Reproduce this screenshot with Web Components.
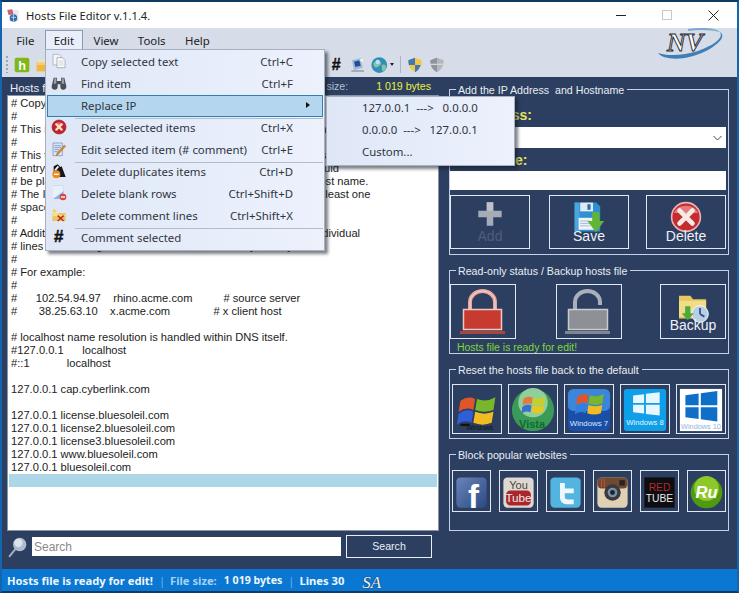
<!DOCTYPE html>
<html>
<head>
<meta charset="utf-8">
<title>Hosts File Editor</title>
<style>
  html, body { margin: 0; padding: 0; height: 100%; overflow: hidden; background: #2d3f60; }
</style>
</head>
<body>
<hf-window>
  <hf-titlebar slot="top">Hosts File Editor v.1.1.4.</hf-titlebar>
  <hf-menubar slot="top"></hf-menubar>
  <hf-toolbar slot="top"></hf-toolbar>

  <hf-hosts-panel slot="left"></hf-hosts-panel>

  <hf-group slot="right" style="height:166px" label="Add the IP Address&#160; and Hostname">
    <hf-ip-form></hf-ip-form>
  </hf-group>
  <hf-group slot="right" style="height:84px;margin-top:15px" label="Read-only status / Backup hosts file">
    <hf-lock-row></hf-lock-row>
  </hf-group>
  <hf-group slot="right" style="height:70px;margin-top:15px" label="Reset the hosts file back to the default">
    <hf-tile-row tiles="xp,vista,win7,win8,win10" tile-w="50" tile-h="50" gap="6" top="7"></hf-tile-row>
  </hf-group>
  <hf-group slot="right" style="height:77px;margin-top:15px" label="Block popular websites">
    <hf-tile-row tiles="facebook,youtube,twitter,instagram,redtube,ru" tile-w="39" tile-h="41.5" gap="8" top="8"></hf-tile-row>
  </hf-group>

  <hf-statusbar slot="bottom"></hf-statusbar>

  <hf-menu slot="popup" style="left:45px;top:49px;width:280px">
    <hf-menu-item icon="copy" shortcut="Ctrl+C">Copy selected text</hf-menu-item>
    <hf-menu-item icon="binoculars" shortcut="Ctrl+F">Find item</hf-menu-item>
    <hf-menu-item selected arrow>Replace IP</hf-menu-item>
    <hf-menu-item icon="redx" shortcut="Ctrl+X" sep>Delete selected items</hf-menu-item>
    <hf-menu-item icon="editdoc" shortcut="Ctrl+E">Edit selected item (# comment)</hf-menu-item>
    <hf-menu-item icon="dupes" shortcut="Ctrl+D" sep>Delete duplicates items</hf-menu-item>
    <hf-menu-item icon="blank" shortcut="Ctrl+Shift+D">Delete blank rows</hf-menu-item>
    <hf-menu-item icon="comments" shortcut="Ctrl+Shift+X">Delete comment lines</hf-menu-item>
    <hf-menu-item icon="hash" sep>Comment selected</hf-menu-item>
  </hf-menu>
  <hf-menu slot="popup" style="left:326px;top:96px;width:189px;padding-top:0;padding-bottom:2px">
    <hf-menu-item>127.0.0.1 &#160;---&gt; &#160;&#160;0.0.0.0</hf-menu-item>
    <hf-menu-item>0.0.0.0 &#160;---&gt; &#160;&#160;127.0.0.1</hf-menu-item>
    <hf-menu-item>Custom...</hf-menu-item>
  </hf-menu>
</hf-window>

<script>
// all the little pictures, drawn on a 24x24 box unless the viewBox says otherwise
const FLAG = (r, g, b, y) => `
  <path d="M3 7 Q7 4 11 6 L10 12 Q6 10 2 13Z" fill="${r}"/>
  <path d="M12 6 Q17 8 22 5 L21 12 Q16 14 11 12Z" fill="${g}"/>
  <path d="M2 14 Q6 11 10 13 L9 19 Q5 17 1 20Z" fill="${b}"/>
  <path d="M11 13 Q16 15 21 13 L20 19 Q15 21 10 19Z" fill="${y}"/>`;
const PANES = (c) => `<path d="M5 6.500 11 5.600V11.500H5ZM12 5.400 19.500 4.300V11.500H12ZM5 12.500H11V18.400L5 17.500ZM12 12.500H19.500V19.700L12 18.600Z" fill="${c}"/>`;
const ICONS = {
  app: `<rect x="5" y="3" width="15" height="18" fill="#e8e8ee"/><path d="M2 3 10 2 12 10 4 11Z" fill="#c9607a"/><circle cx="12" cy="16" r="6" fill="#2f6fa8"/><path d="M8 15h8M12 10v12" stroke="#bcd6ea" stroke-width="1.400"/>`,
  h: `<rect x="1" y="1" width="22" height="22" rx="3" fill="#7fb81c"/><text x="12" y="19" text-anchor="middle" font-family="Liberation Sans" font-weight="700" font-size="19" fill="#fff">h</text>`,
  folder: `<path d="M4 2h10l8 4v5H4z" fill="#e8e2d0"/><path d="M1 8h22v15H1z" fill="#f0b840"/><path d="M1 8h22v4H1z" fill="#f6d070"/>`,
  copy: `<path d="M3 2h9l3 3v13H3z" fill="#f4f6fa" stroke="#9aa0aa"/><path d="M9 7h8l4 4v11H9z" fill="#fff" stroke="#8b919c"/><path d="M11 12h8M11 15h8M11 18h8" stroke="#b5bac3"/>`,
  binoculars: `<path d="M4 4h5v5h6V4h5l3 13a4.500 4.500 0 0 1-9 1v-4h-4v4a4.500 4.500 0 0 1-9-1z" fill="#4a4d55"/><path d="M5 5h3v8H4zM16 5h3l1 8h-4z" fill="#9b9fa8"/>`,
  redx: `<circle cx="12" cy="12" r="10.500" fill="#c5202a"/><circle cx="12" cy="12" r="10.500" fill="none" stroke="#8f2630"/><path d="M5 9a8 8 0 0 1 14 0z" fill="#e8707a"/><path d="M8 8 16 16M16 8 8 16" stroke="#f4e0c8" stroke-width="3.400" stroke-linecap="round"/>`,
  editdoc: `<path d="M3 3h14v19H3z" fill="#dce6f4" stroke="#6e86ad"/><path d="M5 7h10M5 10h10M5 13h7M5 16h5" stroke="#5f7fb3"/><path d="M22 8 11 20l-3 2 1-4L20 6z" fill="#d98a30" stroke="#8a5a20" stroke-width=".6"/>`,
  dupes: `<path d="M4 13V5l6-3 4 4 2-1 6 16H8z" fill="#17171b"/><path d="M5 10 10 4l2 2-5 6z" fill="#f7f7f7"/><circle cx="8" cy="17" r="6" fill="#ee8a22"/><rect x="4.500" y="16" width="7" height="2" fill="#fff"/>`,
  blank: `<rect x="3" y="1" width="16" height="20" fill="#8db4e4"/><path d="M3 1h16v8L3 21z" fill="#e8f0fb"/><circle cx="18" cy="18" r="5" fill="#d8453a"/><rect x="15" y="17" width="6" height="2" fill="#fff"/>`,
  comments: `<path d="M2 9h20v12H2z" fill="#e8c660"/><path d="M2 9h8l2 3h10v2H2z" fill="#f4de94"/><path d="M5 2l1 3 3 1-3 1-1 3-1-3-3-1 3-1z" fill="#f6d420"/><path d="M10 13l9 8M19 13l-9 8" stroke="#c62f22" stroke-width="2.400"/>`,
  add: `<path d="M15 2h10v13h13v10H25v13H15V25H2V15h13z" fill="#a6acb6"/><path d="M15 2h10v13H15z" fill="#bcc2ca"/>`,
  save: `<path d="M2 2h27l5 5v31H2z" fill="#2f8fcf"/><path d="M2 2h6v36H2z" fill="#4aa6de"/><rect x="9" y="2" width="16" height="11" fill="#dfeaf4"/><rect x="18" y="4" width="4" height="7" fill="#2f6fa8"/><rect x="7" y="21" width="23" height="15" fill="#eef2f6"/><path d="M9 25h12M9 28h12M9 31h12" stroke="#9ab0c4"/><path d="M24 14h9v11h6L28.500 39 18 25h6z" fill="#62b533"/>`,
  del: `<circle cx="20" cy="20" r="18" fill="#c52c30"/><circle cx="20" cy="20" r="18" fill="none" stroke="#e8b4b8" stroke-width="2"/><path d="M5 15a16 14 0 0 1 30 0z" fill="#e67a7e"/><path d="M12 12 28 28M28 12 12 28" stroke="#f4ece4" stroke-width="6" stroke-linecap="round"/>`,
  lockred: `<path d="M19 24V17a12.500 11 0 0 1 25 0V24" fill="none" stroke="#e8a6a0" stroke-width="4"/><path d="M19 24V17a12.500 11 0 0 1 25 0V24" fill="none" stroke="#f4d8d0" stroke-width="1"/><rect x="12.500" y="24.500" width="38" height="20" fill="#c63a30" stroke="#f0c8c0" stroke-width="1.500"/><rect x="9" y="46" width="45" height="3" fill="#a8453c"/>`,
  lockgrey: `<path d="M18 24V17a12.500 11 0 0 1 25 0V20" fill="none" stroke="#aab0ba" stroke-width="4"/><rect x="11.500" y="24.500" width="39" height="20" fill="#8e9096" stroke="#c8cbd0" stroke-width="1.500"/><rect x="8" y="46" width="45" height="3" fill="#82868e"/>`,
  backup: `<path d="M2 3h13l3 4h15v22H2z" fill="#e8c860"/><path d="M2 9h31v18H2z" fill="#f2dc88"/><circle cx="26" cy="24" r="9.500" fill="#b8cde6" stroke="#fff"/><path d="M26 24V17M26 24l5 3" stroke="#34507c" stroke-width="2"/><path d="M9 15h6v8h4l-7 8-7-8h4z" fill="#4caa38"/>`,
  xp: `<svg viewBox="0 0 24 24">${FLAG('#e2552a', '#78b72a', '#2f5fd8', '#f0bc20')}<rect x="3" y="19.500" width="5" height="1.200" fill="#111"/><text x="13.500" y="23" text-anchor="middle" font-family="Liberation Sans" font-size="3.600" fill="#111">Windows</text></svg>`,
  vista: `<svg viewBox="0 0 24 24"><circle cx="12" cy="12" r="11.500" fill="#3b9a58"/><circle cx="12" cy="8" r="8" fill="#8fcf9c"/><g transform="translate(5 1.500) scale(.62)">${FLAG('#e8773a', '#c8d028', '#3a6fd0', '#e8c820')}</g><text x="11.500" y="22" text-anchor="middle" font-family="Liberation Sans" font-weight="700" font-size="6" fill="#0f6a30">Vista</text></svg>`,
  win7: `<svg viewBox="0 0 24 24"><rect x=".5" y=".5" width="23" height="23" rx="3" fill="#1a4fa8"/><rect x=".5" y=".5" width="23" height="12" rx="3" fill="#3b86d8"/><g transform="translate(3.500 -.5) scale(.75)">${FLAG('#e2552a', '#78b72a', '#2f7fe0', '#f0bc20')}</g><text x="12" y="20.500" text-anchor="middle" font-family="Liberation Sans" font-size="4.300" fill="#dce8f8">Windows 7</text></svg>`,
  win8: `<svg viewBox="0 0 24 24"><rect x=".5" y=".5" width="23" height="23" rx="1.500" fill="#0f9fe8"/><g transform="translate(.5 -1.300) scale(1 .83)">${PANES('#e8f6ff')}</g><text x="12" y="20" text-anchor="middle" font-family="Liberation Sans" font-size="4.200" fill="#e8f6ff">Windows 8</text></svg>`,
  win10: `<svg viewBox="0 0 24 24"><rect x=".5" y=".5" width="23" height="23" fill="#fff"/><g transform="translate(-2.500 -3) scale(1.200 1.080)">${PANES('#0f6fc8')}</g><text x="12" y="22.500" text-anchor="middle" font-family="Liberation Sans" font-size="4" fill="#8fb4dc">Windows 10</text></svg>`,
  facebook: `<svg viewBox="0 0 24 24"><defs><linearGradient id="fb" x1="0" y1="0" x2="1" y2="1"><stop offset="0" stop-color="#6a84b8"/><stop offset="1" stop-color="#2a4a86"/></linearGradient></defs><rect x="1" y="1" width="22" height="22" rx="3" fill="url(#fb)"/><text x="13.500" y="23" text-anchor="middle" font-family="Liberation Sans" font-weight="700" font-size="24" fill="#fff">f</text></svg>`,
  youtube: `<svg viewBox="0 0 24 24"><rect x="1" y="1" width="22" height="22" rx="3" fill="#ddd8d2"/><text x="12" y="9.500" text-anchor="middle" font-family="Liberation Sans" font-size="8" fill="#4a4440">You</text><rect x="3" y="10.500" width="18" height="11" rx="3" fill="#a8262c"/><text x="12" y="19" text-anchor="middle" font-family="Liberation Sans" font-size="8.500" fill="#f4e8e4">Tube</text></svg>`,
  twitter: `<svg viewBox="0 0 24 24"><rect x="1" y="1" width="22" height="22" rx="3" fill="#54b4e0"/><path d="M8 5h3.500v4H18v3.500h-6.500V15c0 1.500 1 2 2 2H18v3.500h-5C10 20.500 8 18.500 8 15.500z" fill="#eef8fc"/></svg>`,
  instagram: `<svg viewBox="0 0 24 24"><rect x="1" y="1" width="22" height="22" rx="3" fill="#e0d0b4"/><rect x="1" y="1" width="22" height="8" rx="3" fill="#6e4a30"/><circle cx="12" cy="12" r="6" fill="#3a3a3e"/><circle cx="12" cy="12" r="3.500" fill="#7890a8"/><circle cx="12" cy="12" r="1.800" fill="#20242c"/><rect x="17" y="3" width="4" height="4" fill="#2a2420"/><path d="M4 2v6M6 2v6" stroke="#c84a40" stroke-width=".8"/></svg>`,
  redtube: `<svg viewBox="0 0 24 24"><rect x="1" y="1" width="22" height="22" fill="#0e0e10"/><text x="12" y="11" text-anchor="middle" font-family="Liberation Sans" font-size="7.500" fill="#b02a2e">RED</text><text x="12" y="19" text-anchor="middle" font-family="Liberation Sans" font-size="7.500" fill="#e8e8e8">TUBE</text></svg>`,
  ru: `<svg viewBox="0 0 24 24"><circle cx="12" cy="12" r="11.500" fill="#4f9a10"/><circle cx="12" cy="9" r="9" fill="#8cc82a"/><text x="12" y="16" text-anchor="middle" font-family="Liberation Sans" font-weight="700" font-style="italic" font-size="12" fill="#fff">Ru</text></svg>`,
  magnifier: `<path d="M2 23 10 13" stroke="#9fb0c8" stroke-width="2.400" stroke-linecap="round"/><circle cx="14" cy="9" r="8" fill="#aebacd"/><circle cx="12.500" cy="7" r="5" fill="#dde3ec"/>`,
  monitor: `<path d="M3 5l13-3 3 14-13 4z" fill="#9fb6d8"/><path d="M6 7l8-2 2 8-8 2z" fill="#1f4f9a"/><path d="M14 5a5 4 0 0 1 6-2l-1 5z" fill="#f4f4f4"/><path d="M2 20h19v2H2z" fill="#8a94a4"/>`,
  globe: `<circle cx="11" cy="12" r="10.500" fill="#2f8fb8"/><path d="M3 10q5-6 9-3t-2 7-7-4zM14 12q6-2 6 3t-5 5z" fill="#86c2a8"/><circle cx="9" cy="8" r="3" fill="#bde0ec"/>`,
  shield: `<path d="M12 1 22 5c0 9-3 14-10 18C5 19 2 14 2 5z" fill="#f0c840"/><path d="M12 1 2 5c0 3 .3 5 1 7h9zM12 12v11c4-2 7-6 8.500-11z" fill="#3a78c0"/>`,
  shieldoff: `<path d="M12 1 22 5c0 9-3 14-10 18C5 19 2 14 2 5z" fill="#b4b8be"/><path d="M12 1v22C5 19 2 14 2 5z" fill="#8f939b"/><path d="M2 11h20" stroke="#d4d6da" stroke-width="2"/>`
};

class HfIcon extends HTMLElement {
  connectedCallback() {
    const name = this.getAttribute('name');
    const w = this.getAttribute('w') || 16;
    const h = this.getAttribute('h') || w;
    const box = this.getAttribute('box') || '0 0 24 24';
    const body = ICONS[name] || '';
    const svg = body.startsWith('<svg') ? body.replace('<svg', `<svg width="${w}" height="${h}"`)
      : `<svg width="${w}" height="${h}" viewBox="${box}">${body}</svg>`;
    this.attachShadow({ mode: 'open' }).innerHTML = `
      <style>:host { display: inline-block; line-height: 0; flex: none; width: ${w}px; height: ${h}px; } svg { display: block; overflow: visible; }</style>${svg}`;
  }
}

class HfWindow extends HTMLElement {
  constructor() {
    super();
    this.attachShadow({ mode: 'open' }).innerHTML = `
      <style>
        :host {
          display: flex; flex-direction: column; position: relative; box-sizing: border-box;
          width: 739px; height: 593px; background: #2d3f60;
          border-top: 2px solid #103a66; border-bottom: 2px solid #0e3a66;
          border-left: 2px solid #1465ad; border-right: 2px solid #1465ad;
          font: 12px "Liberation Sans", Arial, sans-serif;
        }
        #top { display: block; }
        #main { flex: 1; display: flex; min-height: 0; }
        #left { display: block; width: 445px; flex: none; }
        #right { display: block; width: 280px; margin-left: 2px; padding-top: 12px; }
      </style>
      <div id="top"><slot name="top"></slot></div>
      <div id="main">
        <div id="left"><slot name="left"></slot></div>
        <div id="right"><slot name="right"></slot></div>
      </div>
      <slot name="bottom"></slot>
      <slot name="popup"></slot>
    `;
  }
}

class HfTitlebar extends HTMLElement {
  constructor() {
    super();
    this.attachShadow({ mode: 'open' }).innerHTML = `
      <style>
        :host {
          display: flex; align-items: center; height: 26px; background: #fff; color: #222;
          font: 11.200px "Noto Sans", sans-serif; padding-left: 4px;
        }
        hf-icon { margin-right: 5px; }
        #caption { flex: 1; }
        .ctl { width: 46px; height: 26px; display: flex; align-items: center; justify-content: center; flex: none; }
        #ctls { display: flex; margin-right: 1px; }
      </style>
      <hf-icon name="app" w="15"></hf-icon>
      <div id="caption"><slot></slot></div>
      <div id="ctls">
        <div class="ctl"><svg width="10" height="10"><path d="M0 5.500h10" stroke="#222"/></svg></div>
        <div class="ctl"><svg width="10" height="10"><rect x=".5" y=".5" width="9" height="9" fill="none" stroke="#c8c8c8"/></svg></div>
        <div class="ctl"><svg width="11" height="11"><path d="M.5.500l10 10M10.500.500l-10 10" stroke="#222"/></svg></div>
      </div>
    `;
  }
}

class HfMenubar extends HTMLElement {
  constructor() {
    super();
    const items = ['File', 'Edit', 'View', 'Tools', 'Help'];
    this.attachShadow({ mode: 'open' }).innerHTML = `
      <style>
        :host {
          display: flex; align-items: center; position: relative; height: 24px; background: #d6dce8;
          padding-left: 4.500px; color: #222; font: 11.400px "Noto Sans", sans-serif;
        }
        .item { padding: 0 8.200px; line-height: 20px; border: 1px solid transparent; margin: 0 .5px; border-bottom: 0; }
        .item.open { background: #e8eefa; border-color: #8c9ab0; position: relative; z-index: 1; }
        #logo { margin-left: auto; margin-right: 11px; margin-top: 8px; overflow: visible; }
      </style>
      ${items.map((t) => `<div class="item${t === 'Edit' ? ' open' : ''}">${t}</div>`).join('')}
      <svg id="logo" width="68" height="33" viewBox="0 0 68 33">
        <path d="M0 25C6 33 30 33 50 22 62 15 68 8 62 4 66 10 56 17 40 23 25 28 8 28 0 25Z" fill="#3f7fb8"/>
        <path d="M30 1C44 -1 58 0 62 4 55 2 44 1 30 3Z" fill="#7aa6cf"/>
        <text x="27" y="23" text-anchor="middle" font-family="Liberation Serif" font-style="italic" font-weight="700" font-size="25" fill="#fff" stroke="#23262e" stroke-width=".9" textLength="36" lengthAdjust="spacingAndGlyphs">NV</text>
      </svg>
    `;
  }
}

class HfToolbar extends HTMLElement {
  constructor() {
    super();
    this.attachShadow({ mode: 'open' }).innerHTML = `
      <style>
        :host {
          display: flex; align-items: center; height: 25px; background: #d6dce8; padding-left: 4px;
          box-sizing: border-box;
        }
        #grip { width: 2px; height: 17px; margin-right: 6px; background: repeating-linear-gradient(#9aa4b4 0 2px, transparent 2px 4px); }
        #hash { font: italic 700 16px "Liberation Sans", sans-serif; color: #111; width: 12px; margin-left: 280px; margin-right: 8px; text-align: center; -webkit-text-stroke: .4px #111; }
        #drop { width: 0; height: 0; border: 2.500px solid transparent; border-top: 3px solid #222; border-bottom: 0; margin: 0 6px 0 1px; }
        #sep { width: 1px; height: 17px; background: #aab4c4; margin-right: 6px; }
      </style>
      <div id="grip"></div>
      <hf-icon name="h" w="16"></hf-icon>
      <hf-icon name="folder" w="14" style="margin-left:6px"></hf-icon>
      <div id="hash">#</div>
      <hf-icon name="monitor" w="16"></hf-icon>
      <hf-icon name="globe" w="18" style="margin-left:5px"></hf-icon>
      <div id="drop"></div>
      <div id="sep"></div>
      <hf-icon name="shield" w="16"></hf-icon>
      <hf-icon name="shieldoff" w="16" style="margin-left:6px"></hf-icon>
    `;
  }
}

class HfHostsPanel extends HTMLElement {
  constructor() {
    super();
    const lines = [
      '# Copyright (c) 1993-2009 Microsoft Corp.',
      '#',
      '# This is a sample HOSTS file used by Microsoft TCP/IP for Windows.',
      '#',
      '# This file contains the mappings of IP addresses to host names. Each',
      '# entry should be kept on an individual line. The IP address should',
      '# be placed in the first column followed by the corresponding host name.',
      '# The IP address and the host name should be separated by at least one',
      '# space.',
      '#',
      '# Additionally, comments (such as these) may be inserted on individual',
      '# lines or following the machine name denoted by a \'#\' symbol.',
      '#',
      '# For example:',
      '#',
      '#      102.54.94.97    rhino.acme.com          # source server',
      '#       38.25.63.10    x.acme.com              # x client host',
      '',
      '# localhost name resolution is handled within DNS itself.',
      '#127.0.0.1      localhost',
      '#::1            localhost',
      '',
      '127.0.0.1 cap.cyberlink.com',
      '',
      '127.0.0.1 license.bluesoleil.com',
      '127.0.0.1 license2.bluesoleil.com',
      '127.0.0.1 license3.bluesoleil.com',
      '127.0.0.1 www.bluesoleil.com',
      '127.0.0.1 bluesoleil.com',
      ''
    ];
    this.attachShadow({ mode: 'open' }).innerHTML = `
      <style>
        :host { display: flex; flex-direction: column; height: 100%; padding-left: 5px; box-sizing: border-box; }
        #head { display: flex; height: 18px; align-items: center; width: 432px; color: #e8eef5; font-size: 10.600px; white-space: nowrap; }
        #title { flex: 1; margin: 3px 0 0 3px; font-size: 11.400px; }
        #sizelabel { color: #b4bfd0; margin-right: 28px; }
        #size { margin-right: 8px; color: #e8f040; }
        #list {
          width: 432px; height: 436px; box-sizing: border-box; background: #fff; color: #1c1c1c;
          border: 1px solid #8894a8; padding: 1px 1px 0 1px; font-size: 11.150px; line-height: 13px; overflow: hidden;
        }
        .line { white-space: pre; height: 13px; padding-left: 2px; }
        .line.sel { background: #add6e6; }
        #search { display: flex; align-items: center; margin-top: 4px; width: 432px; }
        #box {
          width: 309px; height: 19px; box-sizing: border-box; background: #fff; color: #8a8a8a; margin-left: 4px;
          font-size: 12px; line-height: 21px; padding-left: 2px;
        }
        #go {
          width: 86px; height: 23px; box-sizing: border-box; border: 1px solid #e8eef5; color: #e8eef5;
          margin-left: 5px; text-align: center; line-height: 21px; font-size: 10.600px;
        }
      </style>
      <div id="head">
        <span id="title">Hosts file:</span>
        <span id="sizelabel">size:</span>
        <span id="size">1 019 bytes</span>
      </div>
      <div id="list">${lines.map((l, i) => `<div class="line${i === 29 ? ' sel' : ''}">${l}</div>`).join('')}</div>
      <div id="search">
        <hf-icon name="magnifier" w="20" style="margin-left:1px"></hf-icon>
        <div id="box">Search</div>
        <div id="go">Search</div>
      </div>
    `;
  }
}

class HfGroup extends HTMLElement {
  constructor() {
    super();
    this.attachShadow({ mode: 'open' }).innerHTML = `
      <style>
        :host { display: block; box-sizing: border-box; border: 1px solid #c3d1e8; color: #e8eef5; }
        #legend {
          display: block; width: fit-content; height: 14px; line-height: 14px; margin: -7px 0 0 6px;
          padding: 0 3px 0 2px; background: #2d3f60; font-size: 10.670px; white-space: nowrap;
        }
      </style>
      <div id="legend"></div>
      <slot></slot>
    `;
  }

  connectedCallback() {
    this.shadowRoot.getElementById('legend').textContent = this.getAttribute('label');
  }
}

class HfTile extends HTMLElement {
  constructor() {
    super();
    this.attachShadow({ mode: 'open' }).innerHTML = `
      <style>
        :host {
          display: flex; flex-direction: column; align-items: center; box-sizing: border-box;
          border: 1px solid #dfe8f5; color: #eef2f8; font-size: 14px; flex: none;
          padding-top: var(--pad, 5px);
        }
        #label { line-height: 16px; margin-top: var(--over, -5px); }
        #label.off { color: #4f5e7a; }
        #label:empty { display: none; }
      </style>
      <slot></slot>
      <div id="label"></div>
    `;
  }

  connectedCallback() {
    const label = this.shadowRoot.getElementById('label');
    label.textContent = this.getAttribute('label') || '';
    if (this.hasAttribute('off')) label.className = 'off';
  }
}

class HfIpForm extends HTMLElement {
  constructor() {
    super();
    this.attachShadow({ mode: 'open' }).innerHTML = `
      <style>
        :host { display: block; padding-right: 2px; }
        .lab { color: #e8e860; font: 700 14px/14px "Liberation Sans", sans-serif; padding-left: 5px; }
        .field { background: #fff; box-sizing: border-box; display: flex; align-items: center; justify-content: flex-end; }
        #buttons { display: flex; margin-top: 5px; }
        hf-tile { width: 80px; height: 54px; }
      </style>
      <div class="lab" style="margin-top:11px">IP Address:</div>
      <div class="field" style="height:21px;margin-top:5px">
        <svg width="9" height="6" style="margin-right:4px"><path d="M.5 1 4.500 5 8.500 1" fill="none" stroke="#444"/></svg>
      </div>
      <div class="lab" style="margin-top:5px">Hostname:</div>
      <div class="field" style="height:19px;margin-top:4px"></div>
      <div id="buttons">
        <hf-tile label="Add" off><hf-icon name="add" w="26" style="margin-bottom:6px" box="0 0 40 40"></hf-icon></hf-tile>
        <hf-tile label="Save" style="margin-left:19px"><hf-icon name="save" w="32" box="0 0 40 40"></hf-icon></hf-tile>
        <hf-tile label="Delete" style="margin-left:17px"><hf-icon name="del" w="32" box="0 0 40 40"></hf-icon></hf-tile>
      </div>
    `;
  }
}

class HfLockRow extends HTMLElement {
  constructor() {
    super();
    this.attachShadow({ mode: 'open' }).innerHTML = `
      <style>
        :host { display: block; padding-right: 2px; }
        #row { display: flex; margin-top: 6px; }
        hf-tile { width: 66px; height: 55px; --pad: 0px; }
        #msg { color: #7ed83a; font-size: 10.450px; line-height: 14px; padding: 2px 0 0 7px; }
      </style>
      <div id="row">
        <hf-tile><hf-icon name="lockred" w="64" h="53" box="0 0 64 53"></hf-icon></hf-tile>
        <hf-tile style="margin-left:40px"><hf-icon name="lockgrey" w="64" h="53" box="0 0 64 53"></hf-icon></hf-tile>
        <hf-tile label="Backup" style="margin-left:38px;--pad:8px;--over:-4px"><hf-icon name="backup" w="32" h="28" box="0 0 36 32"></hf-icon></hf-tile>
      </div>
      <div id="msg">Hosts file is ready for edit!</div>
    `;
  }
}

class HfTileRow extends HTMLElement {
  connectedCallback() {
    const w = this.getAttribute('tile-w');
    const h = this.getAttribute('tile-h');
    const names = this.getAttribute('tiles').split(',');
    this.attachShadow({ mode: 'open' }).innerHTML = `
      <style>
        :host { display: flex; justify-content: flex-end; gap: ${this.getAttribute('gap')}px; padding-right: 2px; margin-top: ${this.getAttribute('top')}px; }
        hf-tile { width: ${w}px; height: ${h}px; justify-content: center; --pad: 0px; }
      </style>
      ${names.map((n) => `<hf-tile><hf-icon name="${n}" w="${w - 6}" style="margin-top:${(h - w + 4) / 2}px"></hf-icon></hf-tile>`).join('')}
    `;
  }
}

class HfStatusbar extends HTMLElement {
  constructor() {
    super();
    this.attachShadow({ mode: 'open' }).innerHTML = `
      <style>
        :host {
          display: flex; align-items: center; height: 22px; background: #0a78d2; color: #eef6fc; padding-left: 5px;
          font: 700 11.200px "Noto Sans", sans-serif; white-space: pre;
        }
        .dim { color: #a6d2f2; }
        .bar { color: #6fb2e8; font-weight: 400; margin: 0 5px 0 6px; }
        #bytes { margin-left: 7px; font-size: 10.600px; }
        #sa { font: italic 400 17px "Liberation Serif", serif; color: #f4f8fb; margin: 5px 0 0 18px; text-shadow: 0 0 1px #0d2a45, 0 0 1px #0d2a45; }
      </style>
      <span>Hosts file is ready for edit!</span>
      <span class="bar">|</span>
      <span class="dim">File size:</span>
      <span id="bytes">1 019 bytes</span>
      <span class="bar">|</span>
      <span>Lines 30</span>
      <span id="sa">SA</span>
    `;
  }
}

class HfMenu extends HTMLElement {
  constructor() {
    super();
    this.attachShadow({ mode: 'open' }).innerHTML = `
      <style>
        :host {
          display: block; position: absolute; box-sizing: border-box; z-index: 5; padding: 1px 1px 1px 0;
          margin-left: -2px; margin-top: -2px;
          background: linear-gradient(90deg, #dfe7f7, #ecf1fc); border: 1px solid #a7b0bf;
          box-shadow: 3px 3px 3px rgba(20, 25, 35, .55);
        }
      </style>
      <slot></slot>
    `;
  }
}

class HfMenuItem extends HTMLElement {
  constructor() {
    super();
    this.attachShadow({ mode: 'open' }).innerHTML = `
      <style>
        :host {
          display: grid; grid-template-columns: 35px 1fr auto 30px; align-items: center; position: relative;
          box-sizing: border-box; height: 22px; padding-bottom: 2px; color: #2f3540; font: 11.400px "Noto Sans", sans-serif; white-space: nowrap;
        }
        :host([selected]) { background: #b5d6ef; box-shadow: inset 0 0 0 1px #2f7fb4; margin-left: 1px; grid-template-columns: 34px 1fr auto 30px; }
        :host([sep])::before { content: ""; position: absolute; left: 29px; right: 0; top: 1px; height: 1px; background: #b4bcc8; }
        #ic { display: flex; justify-content: center; align-items: center; padding-right: 10px; }
        #hash { font: italic 700 17px "Liberation Sans", sans-serif; color: #111; -webkit-text-stroke: .5px #111; }
        #arrow { width: 0; height: 0; border: 3.500px solid transparent; border-left: 4px solid #111; border-right: 0; justify-self: center; }
      </style>
      <div id="ic"></div>
      <div><slot></slot></div>
      <div id="sc"></div>
      <div id="end"></div>
    `;
  }

  connectedCallback() {
    const icon = this.getAttribute('icon');
    const ic = this.shadowRoot.getElementById('ic');
    if (icon === 'hash') ic.innerHTML = '<span id="hash">#</span>';
    else if (icon) ic.innerHTML = `<hf-icon name="${icon}" w="16"></hf-icon>`;
    this.shadowRoot.getElementById('sc').textContent = this.getAttribute('shortcut') || '';
    if (this.hasAttribute('arrow')) this.shadowRoot.getElementById('end').id = 'arrow';
  }
}

customElements.define('hf-icon', HfIcon);
customElements.define('hf-tile', HfTile);
customElements.define('hf-window', HfWindow);
customElements.define('hf-titlebar', HfTitlebar);
customElements.define('hf-menubar', HfMenubar);
customElements.define('hf-toolbar', HfToolbar);
customElements.define('hf-hosts-panel', HfHostsPanel);
customElements.define('hf-group', HfGroup);
customElements.define('hf-ip-form', HfIpForm);
customElements.define('hf-lock-row', HfLockRow);
customElements.define('hf-tile-row', HfTileRow);
customElements.define('hf-statusbar', HfStatusbar);
customElements.define('hf-menu', HfMenu);
customElements.define('hf-menu-item', HfMenuItem);
</script>
</body>
</html>
